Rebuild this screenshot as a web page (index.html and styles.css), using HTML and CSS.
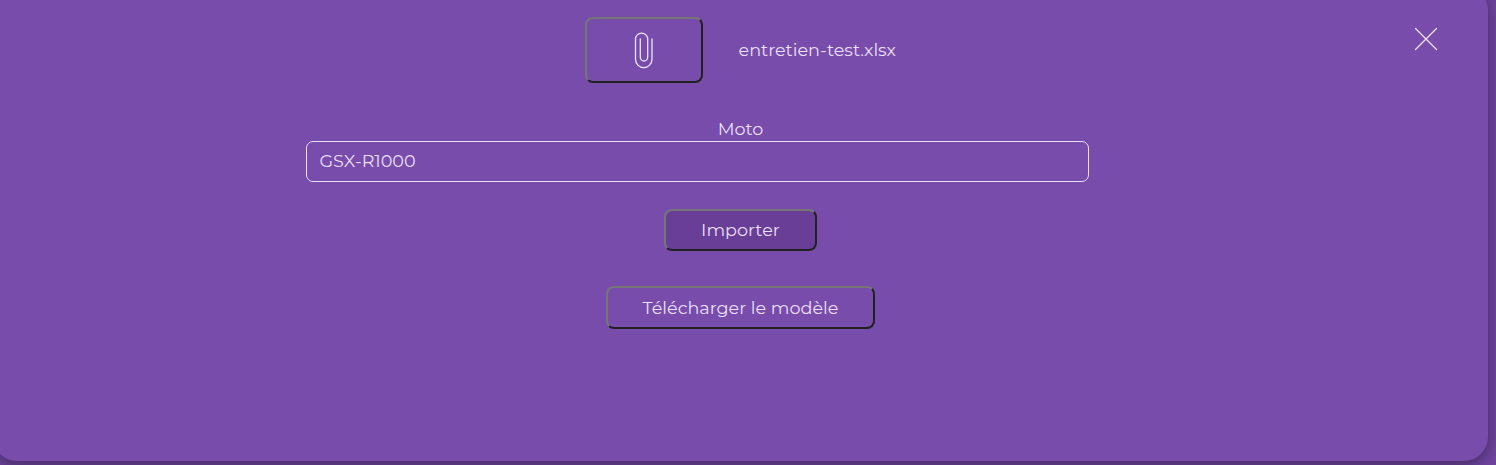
FILE: index.html
```html
<!DOCTYPE html>
<html lang="fr">
<head>
<meta charset="utf-8">
<title>Import</title>
<link rel="stylesheet" href="styles.css">
</head>
<body>
<main class="modal">
  <button class="close" aria-label="Fermer"><svg width="24" height="24" viewBox="0 0 24 24"><path d="M1.5 1.5L22.5 22.5M22.5 1.5L1.5 22.5"/></svg></button>
  <form class="form">
    <div class="file-row">
      <button type="button" class="btn attach" aria-label="Joindre un fichier"><svg width="20" height="38" viewBox="0 0 20 38"><path d="M18 8V28A8.25 8.7 0 0 1 1.5 28V8A6.1 5.8 0 0 1 13.7 8V26A3.7 4 0 0 1 6.3 26V8"/></svg></button>
      <span class="filename">entretien-test.xlsx</span>
    </div>
    <label class="label">Moto</label>
    <div class="select"><span>GSX-R1000</span></div>
    <button type="button" class="btn import"><span>Importer</span></button>
    <button type="button" class="btn download"><span>Télécharger le modèle</span></button>
  </form>
</main>
</body>
</html>
```
FILE: styles.css
```css
* { box-sizing: border-box; }
body {
  margin: 0;
  height: 465px;
  overflow: hidden;
  background: #6f459f;
  color: #eadff5;
  font: 400 17.6px/22px Montserrat, Inter, sans-serif;
}
.modal {
  position: relative;
  width: 1495px;
  height: 475px;
  margin: -14px 0 0 -7px;
  padding-top: 31px;
  border-radius: 24px;
  background: #784cab;
  box-shadow: 0 4px 16px rgba(0, 0, 0, .4);
}
.form { display: flex; flex-direction: column; align-items: center; }
.btn {
  display: flex;
  align-items: center;
  justify-content: center;
  padding: 0;
  border: 2px solid;
  border-color: #767676 #212121 #212121 #767676;
  border-radius: 8px;
  background: transparent;
  color: inherit;
  font: inherit;
}
svg { display: block; fill: none; stroke: #eee4f8; stroke-width: 1.3; stroke-linecap: round; }
.close { position: absolute; top: 41px; right: 50px; padding: 0; border: 0; background: none; }
.file-row { display: flex; align-items: center; gap: 35.5px; width: 311px; height: 66px; }
.attach { flex: none; width: 118px; height: 66px; }
.filename { white-space: nowrap; }
.label { margin-top: 35px; }
.select {
  display: flex;
  align-items: center;
  width: 783px;
  height: 41px;
  margin: 1px 87px 0 0;
  padding: 0 0 1px 13px;
  border: 1px solid #eadff5;
  border-radius: 7px;
}
.import { width: 153px; height: 42px; margin-top: 27px; background: #693e97; }
.download { width: 269px; height: 43px; margin-top: 35px; }
```
